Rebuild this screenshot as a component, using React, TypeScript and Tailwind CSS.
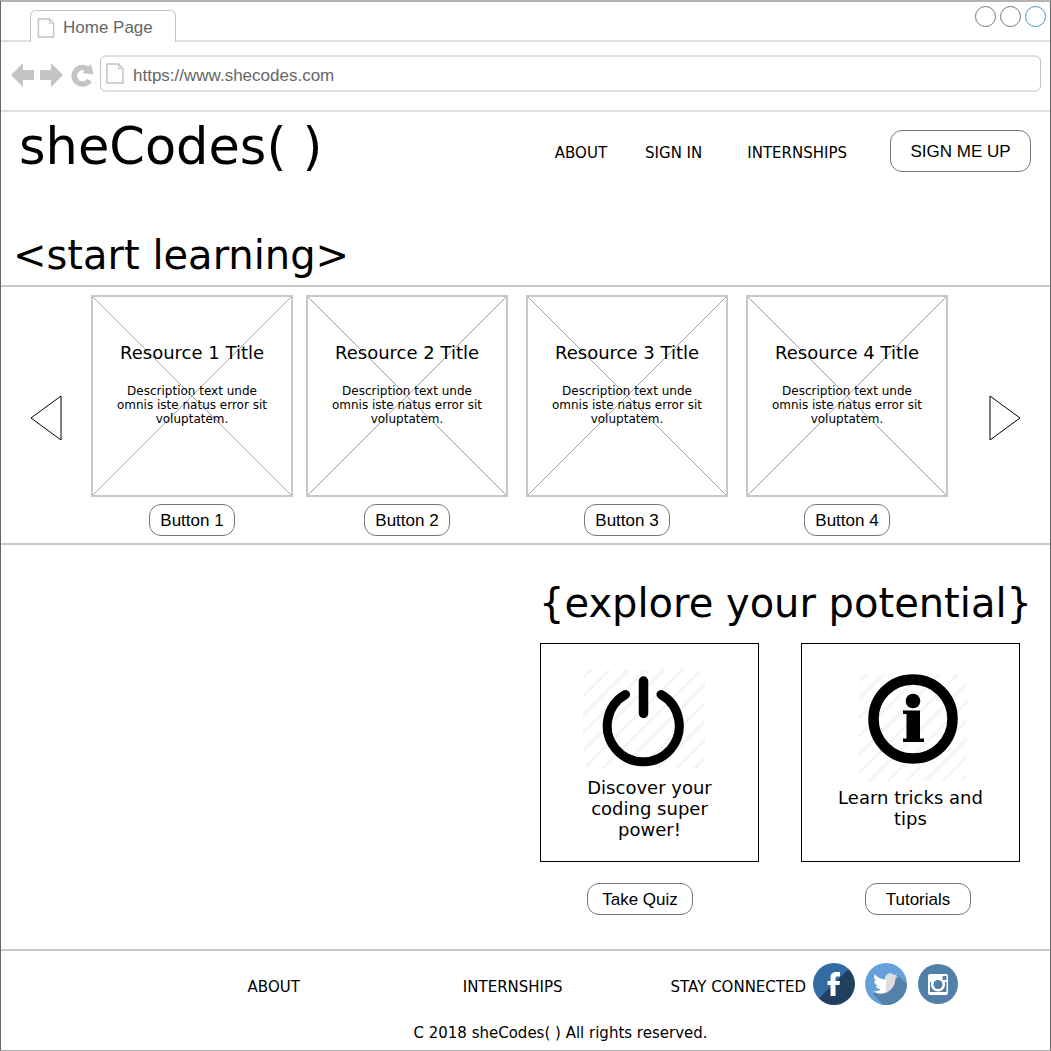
import React from "react";
import { FaTwitter } from "react-icons/fa";

const sans = "font-['Liberation_Sans',Arial,sans-serif]";

const resources = [1, 2, 3, 4];

function PageIcon({ className }: { className: string }) {
  return (
    <svg viewBox="0 0 18 21" className={className} fill="none" aria-hidden="true">
      <path d="M1 1H12.500L17 5.500V20H1Z" stroke="#c4c4c4" strokeWidth="1.5" />
      <path d="M12.500 1V5.500H17" stroke="#c4c4c4" strokeWidth="1" />
    </svg>
  );
}

function PillButton({ children, className }: { children: React.ReactNode; className: string }) {
  return (
    <button
      type="button"
      className={`${sans} rounded-[12px] border border-[#777] bg-white pt-0.5 text-[17px] leading-5 text-black ${className}`}
    >
      {children}
    </button>
  );
}

function BrowserChrome() {
  return (
    <div className={sans}>
      <div className="flex h-10 items-end justify-between border-b-2 border-[#e0e0e0] pl-[29px]">
        <button
          type="button"
          className="-mb-0.5 flex h-8 w-[146px] items-center rounded-t-md border border-b-0 border-[#c4c4c4] bg-white pt-0.5 pl-1.5 text-[17px] text-[#666]"
        >
          <PageIcon className="mr-2 h-5 w-[18px]" />
          Home Page
        </button>
        <div className="flex gap-1 self-start pt-1 pr-1">
          <button type="button" aria-label="Minimize" className="size-[21px] rounded-full border border-[#777]" />
          <button type="button" aria-label="Maximize" className="size-[21px] rounded-full border border-[#777]" />
          <button type="button" aria-label="Close" className="size-[21px] rounded-full border border-[#3b97e3]" />
        </div>
      </div>
      <div className="flex items-start border-b-2 border-[#e0e0e0] pt-[13px] pr-[9px] pb-[18px] pl-2.5">
        <div className="flex h-[37px] items-center pt-0.5 text-[#c4c4c4]">
          <button type="button" aria-label="Back" className="mr-1.5">
            <svg viewBox="0 0 23 24" className="h-6 w-[23px]" fill="currentColor">
              <path d="M0 12L12 0V7H23V17H12V24Z" />
            </svg>
          </button>
          <button type="button" aria-label="Forward" className="mr-2">
            <svg viewBox="0 0 23 24" className="h-6 w-[23px]" fill="currentColor">
              <path d="M23 12L11 0V7H0V17H11V24Z" />
            </svg>
          </button>
          <button type="button" aria-label="Reload" className="mr-1.5">
            <svg viewBox="0 0 23 24" className="h-6 w-[23px]" fill="none">
              <path d="M17.500 7A8.300 8.300 0 1 0 18.500 17.200" stroke="currentColor" strokeWidth="5.500" />
              <path d="M20 1L22.500 11.500L11.500 10Z" fill="currentColor" />
            </svg>
          </button>
        </div>
        <div className="flex h-[37px] flex-1 items-center rounded-md border-x border-y-2 border-x-[#c4c4c4] border-y-[#e0e0e0] pl-[5px]">
          <PageIcon className="h-[21px] w-[18px]" />
          <input
            type="text"
            aria-label="Address"
            defaultValue="https://www.shecodes.com"
            className="ml-[9px] h-[33px] min-w-0 flex-1 pt-1 text-[17px] text-[#666] outline-none"
          />
        </div>
      </div>
    </div>
  );
}

function ResourceCard({ n }: { n: number }) {
  return (
    <div className="flex w-[202px] flex-col items-center">
      <article className="relative h-[202px] w-full border-2 border-[#c8c8c8] pt-[45px] text-center">
        <svg viewBox="0 0 198 198" className="absolute inset-0 size-full" aria-hidden="true">
          <path d="M0 0L198 198M198 0L0 198" stroke="#8a8a8a" strokeWidth="0.8" />
        </svg>
        <h3 className="relative text-[18px] leading-[21px]">Resource {n} Title</h3>
        <p className="relative mx-auto mt-[21px] w-[160px] text-[12px] leading-[14px]">
          Description text unde omnis iste natus error sit voluptatem.
        </p>
      </article>
      <PillButton className="mt-[7px] h-8 w-[86px]">Button {n}</PillButton>
    </div>
  );
}

function HatchDefs({ id }: { id: string }) {
  return (
    <defs>
      <pattern id={id} width="13" height="13" patternUnits="userSpaceOnUse" patternTransform="rotate(45)">
        <rect width="3" height="13" fill="#f5f5f5" />
      </pattern>
    </defs>
  );
}

function PowerArt() {
  return (
    <svg viewBox="0 0 217 133" className="block w-full" aria-hidden="true">
      <HatchDefs id="hatch-power" />
      <rect x="42" y="26" width="122" height="98" rx="8" fill="url(#hatch-power)" />
      <path d="M84.500 50.500A36 36 0 1 0 120 50.500" fill="none" stroke="#000" strokeWidth="9" strokeLinecap="round" />
      <path d="M102.500 37V69.500" stroke="#000" strokeWidth="9.500" strokeLinecap="round" />
    </svg>
  );
}

function InfoArt() {
  return (
    <svg viewBox="0 0 217 143" className="block w-full" aria-hidden="true">
      <HatchDefs id="hatch-info" />
      <rect x="57" y="30" width="108" height="107" rx="8" fill="url(#hatch-info)" />
      <circle cx="111" cy="75" r="39.500" fill="none" stroke="#000" strokeWidth="10.500" />
      <circle cx="111" cy="57" r="7.300" />
      <path d="M101 66.500H118V94.500H122V98H101V94.500H104.500V70H101Z" />
    </svg>
  );
}

function SocialIcons() {
  return (
    <div className="flex items-center">
      <a href="#facebook" aria-label="Facebook">
        <svg viewBox="0 0 42 42" className="size-[42px]">
          <defs>
            <linearGradient id="fb" x1="0" y1="0" x2="1" y2="1">
              <stop offset="0.5" stopColor="#346ba3" />
              <stop offset="0.5" stopColor="#223f60" />
            </linearGradient>
          </defs>
          <circle cx="21" cy="21" r="21" fill="url(#fb)" />
          <path
            d="M27 9V13.500H24.500C23 13.500 22.500 14 22.500 15.500V18H27L26.500 22H22.500V33H17.500V22H14.500V18H17.500V14.500C17.500 10.500 20 9 23.500 9Z"
            fill="#fff"
          />
        </svg>
      </a>
      <a href="#twitter" aria-label="Twitter" className="ml-2.5">
        <svg viewBox="0 0 42 42" className="size-[42px]">
          <defs>
            <clipPath id="tw-disc">
              <circle cx="21" cy="21" r="21" />
            </clipPath>
            <linearGradient id="bird">
              <stop offset="0.52" stopColor="#fff" />
              <stop offset="0.52" stopColor="#dedede" />
            </linearGradient>
          </defs>
          <g clipPath="url(#tw-disc)">
            <rect width="42" height="42" fill="#64a1da" />
            <path d="M32 12L42 21V42H18L8 31Z" fill="#5480aa" />
          </g>
          <FaTwitter x="8" y="8" size={25} fill="url(#bird)" />
        </svg>
      </a>
      <a href="#instagram" aria-label="Instagram" className="ml-[11px]">
        <svg viewBox="0 0 40 40" className="size-10">
          <circle cx="20" cy="20" r="20" fill="#527fa8" />
          <rect x="10" y="10" width="20" height="21" rx="2" fill="#fff" />
          <path d="M12 18H14.300A6.500 6.500 0 1 0 26 18H28.500V28H12Z" fill="#527fa8" />
          <circle cx="20" cy="20.500" r="7" fill="#fff" />
          <circle cx="20" cy="20.500" r="4.500" fill="#527fa8" />
          <rect x="24.500" y="12" width="4" height="4" rx="0.800" fill="#527fa8" />
        </svg>
      </a>
    </div>
  );
}

export default function App() {
  return (
    <div className="flex min-h-screen flex-col border-x border-t-2 border-b border-x-[#666] border-t-[#b3b3b3] border-b-[#aaa] bg-white font-['DejaVu_Sans',Verdana,sans-serif] text-black">
      <BrowserChrome />

      <header className="flex items-start justify-between pr-[19px] pl-[18px]">
        <h1 className="pt-[5px] text-[51px] leading-[60px]">sheCodes( )</h1>
        <nav className="flex items-center pt-[18px] text-[15px]">
          <a href="#about" className="mr-[38px] pt-1">ABOUT</a>
          <a href="#sign-in" className="mr-[45px] pt-1">SIGN IN</a>
          <a href="#internships" className="mr-[43px] pt-1">INTERNSHIPS</a>
          <PillButton className="h-[42px] w-[141px]">SIGN ME UP</PillButton>
        </nav>
      </header>

      <section className="pt-[54px]">
        <h2 className="pb-1.5 pl-3 text-[40px] leading-[48px]">&lt;start learning&gt;</h2>
        <div className="flex items-start justify-between border-y-2 border-[#c8c8c8] px-[29px] pt-2 pb-[7px]">
          <button type="button" aria-label="Previous resources" className="mt-[100px] shrink-0">
            <svg viewBox="0 0 32 46" className="h-[46px] w-8" fill="none">
              <path d="M31 1V45L1 23Z" stroke="#000" />
            </svg>
          </button>
          <div className="mr-[41px] ml-[29px] grid flex-1 grid-cols-[215fr_220fr_220fr_202fr]">
            {resources.map((n) => (
              <ResourceCard key={n} n={n} />
            ))}
          </div>
          <button type="button" aria-label="Next resources" className="mt-[100px] shrink-0">
            <svg viewBox="0 0 32 46" className="h-[46px] w-8" fill="none">
              <path d="M1 1V45L31 23Z" stroke="#000" />
            </svg>
          </button>
        </div>
      </section>

      <section className="flex flex-1 flex-col items-end pt-[34px] pr-[30px] pb-[34px]">
        <h2 className="-mr-3 text-[40px] leading-[48px]">{"{explore your potential}"}</h2>
        <div className="mt-4 w-[480px]">
          <div className="flex justify-between">
            <article className="h-[219px] w-[219px] border border-black text-center text-[18px] leading-[21px]">
              <PowerArt />
              <p className="mx-auto w-[140px]">Discover your coding super power!</p>
            </article>
            <article className="h-[219px] w-[219px] border border-black text-center text-[18px] leading-[21px]">
              <InfoArt />
              <p className="mx-auto w-[160px]">Learn tricks and tips</p>
            </article>
          </div>
          <div className="mt-[21px] flex justify-between pr-[49px] pl-[47px]">
            <PillButton className="h-8 w-[106px]">Take Quiz</PillButton>
            <PillButton className="h-8 w-[106px]">Tutorials</PillButton>
          </div>
        </div>
      </section>

      <footer className="border-t-2 border-[#c8c8c8] pt-3 pb-1.5 text-[15px]">
        <div className="flex items-center justify-end pr-[92px]">
          <a href="#about" className="mr-[163px] pt-1.5">ABOUT</a>
          <a href="#internships" className="mr-[108px] pt-1.5">INTERNSHIPS</a>
          <span className="mr-[7px] pt-1.5">STAY CONNECTED</span>
          <SocialIcons />
        </div>
        <p className="mt-[17px] pl-[70px] text-center leading-[22px]">C 2018 sheCodes( ) All rights reserved.</p>
      </footer>
    </div>
  );
}
